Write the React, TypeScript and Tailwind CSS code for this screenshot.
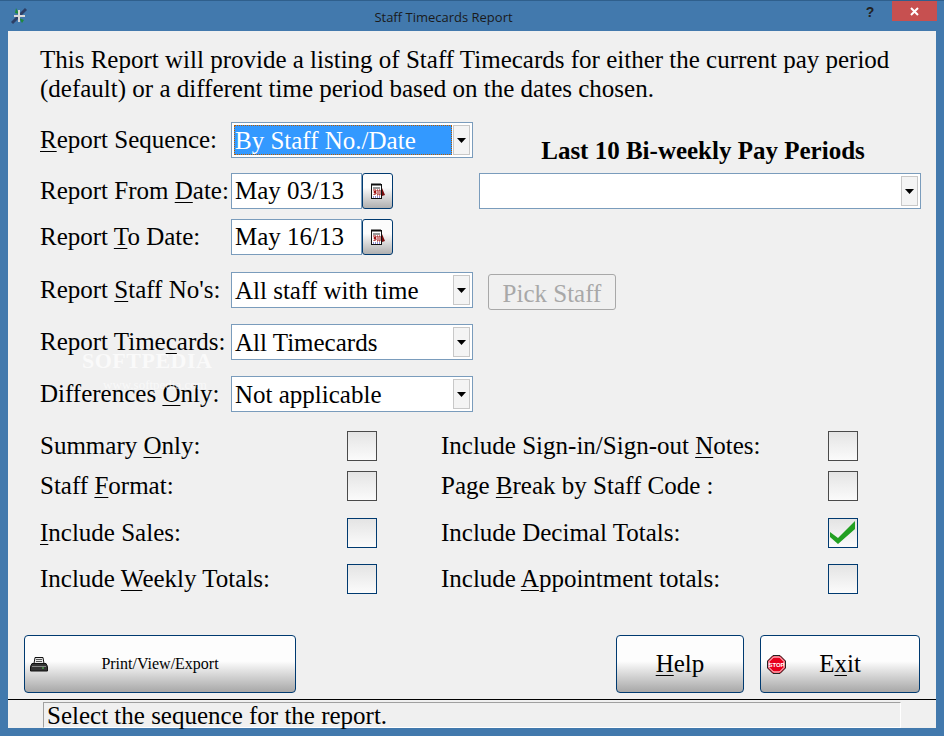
import React from 'react';

const serif = "font-['Liberation_Serif','Times_New_Roman',serif]";

const Hot = ({ children }: { children: React.ReactNode }) => <span className="underline underline-offset-[3px] decoration-1">{children}</span>;

const ComboBox = ({ value, selected, className }: { value?: string; selected?: boolean; className?: string }) => (
  <div className={`flex h-9 items-stretch border border-[#7a9cbc] bg-white p-[2px] ${className ?? 'w-[242px]'}`}>
    <div className={`flex-1 pl-[1px] leading-[31px] whitespace-nowrap ${selected ? 'bg-[#3399ff] text-white outline-1 outline-dotted outline-[#b85c00] -outline-offset-1' : ''}`}>
      {value}
    </div>
    <div className="ml-[1px] flex w-[17px] items-center justify-center border-r border-b border-l border-t border-[#c8c8c8] bg-[#f4f4f4]">
      <svg width="9" height="5" viewBox="0 0 9 5">
        <path d="M0 0h9L4.5 5z" fill="#000" />
      </svg>
    </div>
  </div>
);

const CalendarIcon = () => (
  <svg width="16" height="18" viewBox="0 0 16 18">
    <path d="M12 6l3 7-3 1z" fill="#7a0c0c" />
    <rect x="1.5" y="2.5" width="10" height="14" fill="#fff" stroke="#111" />
    <path d="M2 1v3M4 1v3M6 1v3M8 1v3M10 1v3" stroke="#111" />
    <path d="M3 6h7" stroke="#333" />
    <path d="M3 8h3v1.500H4V10.500h2V12H4v1M7 8h1v5H7M9 8h1v5H9" fill="none" stroke="#a01010" />
    <path d="M3 15h7" stroke="#2222aa" strokeDasharray="1 1" />
  </svg>
);

const DateField = ({ value }: { value: string }) => (
  <div className="flex">
    <div className="h-9 w-[131px] border border-[#7a9cbc] bg-white pl-[3px] leading-[33px]">{value}</div>
    <button className="flex h-9 w-[31px] items-center justify-center rounded-[3px] border border-[#003a70] bg-gradient-to-b from-[#fcfcfc] from-40% to-[#b0b0b0]">
      <CalendarIcon />
    </button>
  </div>
);

const Row = ({ label, className, children }: { label: React.ReactNode; className?: string; children: React.ReactNode }) => (
  <div className={`flex h-9 items-center ${className ?? ''}`}>
    <div className="w-[191px] shrink-0 whitespace-nowrap">{label}</div>
    {children}
  </div>
);

const CheckBox = ({ checked, dim }: { checked?: boolean; dim?: boolean }) => (
  <div className={`flex h-[30px] w-[30px] items-center justify-center border bg-gradient-to-b from-[#e4e4e4] to-[#fbfbfb] ${dim ? 'border-[#4a4a4a]' : 'border-[#003a70]'}`}>
    {checked && (
      <svg width="26" height="24" viewBox="0 0 26 24">
        <path d="M0 11l8 6L25 0v8L8 23 0 16z" fill="#22a022" />
      </svg>
    )}
  </div>
);

const CheckRow = ({ left, right, checked, dim, className }: { left: React.ReactNode; right: React.ReactNode; checked?: boolean; dim?: boolean; className?: string }) => (
  <div className={`flex h-[30px] items-center ${className ?? ''}`}>
    <div className="w-[307px] shrink-0 whitespace-nowrap">{left}</div>
    <CheckBox dim={dim} />
    <div className="ml-[64px] w-[387px] shrink-0 whitespace-nowrap">{right}</div>
    <CheckBox checked={checked} dim={dim} />
  </div>
);

const PrinterIcon = () => (
  <svg width="18" height="15" viewBox="0 0 18 15">
    <path d="M5 0.500h8l1 6H4z" fill="#e8e8e8" stroke="#111" />
    <path d="M6 2.500h6M6 4.500h6" stroke="#555" />
    <path d="M2 6.500h14l1.500 3v4.500H0.500V9.500z" fill="#333" stroke="#111" />
    <path d="M2 9.500h14" stroke="#888" />
    <rect x="12" y="10.500" width="2" height="1" fill="#5c5" />
  </svg>
);

const StopIcon = () => (
  <svg width="19" height="19" viewBox="0 0 19 19">
    <path d="M6 .5h7L18.500 6v7L13 18.500H6L.5 13V6z" fill="#e8001c" stroke="#222" />
    <path d="M6.500 2h6L17 6.500v6L12.500 17h-6L2 12.500v-6z" fill="none" stroke="#fff" />
    <text x="9.500" y="11.500" textAnchor="middle" fontSize="6" fontWeight="700" fill="#fff" fontFamily="Liberation Sans, sans-serif">STOP</text>
  </svg>
);

const bigButton = 'flex h-[58px] items-center rounded-[4px] border border-[#003a70] bg-gradient-to-b from-[#fdfdfd] from-45% to-[#a8a8a8]';

export default function App() {
  return (
    <div className={`flex h-[736px] w-[944px] flex-col border-t border-[#2f5f8c] bg-[#4279ad] ${serif} text-[25px] text-black`}>
      {/* Title bar */}
      <div className="flex h-[30px] shrink-0 items-start">
        <div className="ml-[11px] mt-[6px] w-[16px]">
          <svg width="16" height="18" viewBox="0 0 16 18">
            <path d="M1 16L15 2" stroke="#2d3f66" strokeWidth="3" />
            <path d="M5 1l3 6-4-1zM11 16l-3-5 5 2z" fill="#1f8a3a" />
            <path d="M8 3v12M3 9h11" stroke="#d8d8d8" strokeWidth="2" />
          </svg>
        </div>
        <div className="flex-1 pt-[7px] text-center font-['Open_Sans',sans-serif] text-[13px] leading-[18px] text-[#1a1a1a]">Staff Timecards Report</div>
        <div className="mt-[3px] w-[20px] text-center font-['Liberation_Sans',sans-serif] text-[14px] leading-[16px] font-bold text-[#222]">?</div>
        <div className="ml-[12px] mr-[7px] flex h-[20px] w-[45px] items-center justify-center bg-[#c75050]">
          <svg width="9" height="9" viewBox="0 0 9 9">
            <path d="M1 1l7 7M8 1L1 8" stroke="#fff" strokeWidth="2" />
          </svg>
        </div>
      </div>

      {/* Client area */}
      <div className="relative mx-2 mb-2 flex flex-1 flex-col bg-[#f0f0f0]">
        <div className="pl-[32px] pt-[14px] leading-[29px]">
          <p className="whitespace-nowrap">This Report will provide a listing of Staff Timecards for either the current pay period</p>
          <p className="whitespace-nowrap">(default) or a different time period based on the dates chosen.</p>
        </div>

        <div className="pl-[32px]">
          <Row label={<><Hot>R</Hot>eport Sequence:</>} className="mt-[19px]">
            <ComboBox value="By Staff No./Date" selected />
            <div className="ml-[6px] mt-[22px] w-[448px] text-center font-bold">Last 10 Bi-weekly Pay Periods</div>
          </Row>
          <Row label={<>Report From <Hot>D</Hot>ate:</>} className="mt-[15px]">
            <DateField value="May 03/13" />
            <ComboBox className="ml-[86px] w-[442px]" />
          </Row>
          <Row label={<>Report <Hot>T</Hot>o Date:</>} className="mt-[10px]">
            <DateField value="May 16/13" />
          </Row>
          <Row label={<>Report <Hot>S</Hot>taff No's:</>} className="mt-[17px]">
            <ComboBox value="All staff with time" />
            <button className="ml-[15px] mt-[4px] h-9 w-[128px] rounded-[3px] border border-[#a8a8a8] text-[#a8a8a8]">Pick Staff</button>
          </Row>
          <Row label={<>Report Time<Hot>c</Hot>ards:</>} className="mt-[16px]">
            <ComboBox value="All Timecards" />
          </Row>
          <Row label={<>Differences <Hot>O</Hot>nly:</>} className="mt-[16px]">
            <ComboBox value="Not applicable" />
          </Row>

          <CheckRow left={<>Summary <Hot>O</Hot>nly:</>} right={<>Include Sign-in/Sign-out <Hot>N</Hot>otes:</>} dim className="mt-[19px]" />
          <CheckRow left={<>Staff <Hot>F</Hot>ormat:</>} right={<>Page <Hot>B</Hot>reak by Staff Code :</>} dim className="mt-[10px]" />
          <CheckRow left={<><Hot>I</Hot>nclude Sales:</>} right="Include Decimal Totals:" checked className="mt-[17px]" />
          <CheckRow left={<>Include <Hot>W</Hot>eekly Totals:</>} right={<>Include <Hot>A</Hot>ppointment totals:</>} className="mt-[16px]" />
        </div>

        {/* Bottom buttons */}
        <div className="mt-[41px] flex pl-[16px]">
          <button className={`${bigButton} w-[272px] pl-[5px] text-[16px]`}>
            <PrinterIcon />
            <span className="flex-1 pr-[23px] text-center">Print/View/Export</span>
          </button>
          <button className={`${bigButton} ml-[320px] w-[128px] justify-center`}>
            <span><Hot>H</Hot>elp</span>
          </button>
          <button className={`${bigButton} ml-[16px] w-[160px] pl-[6px]`}>
            <StopIcon />
            <span className="flex-1 pr-[25px] text-center">E<Hot>x</Hot>it</span>
          </button>
        </div>

        {/* Status bar */}
        <div className="mt-[6px] h-[2px] border-t border-black" />
        <div className="ml-[35px] mt-[1px] h-[26px] w-[858px] border-t border-l border-r border-b border-t-[#a0a0a0] border-l-[#a0a0a0] border-r-white border-b-white pl-[3px] leading-[26px] whitespace-nowrap">
          Select the sequence for the report.
        </div>

        {/* Watermark */}
        <div className="absolute left-[74px] top-[318px] text-[22px] leading-[24px] font-bold tracking-[0.5px] text-white/70">SOFTPEDIA</div>
        <div className="absolute left-[95px] top-[346px] text-[13px] leading-[16px] text-white/60">www.softpedia.com</div>
      </div>
    </div>
  );
}
